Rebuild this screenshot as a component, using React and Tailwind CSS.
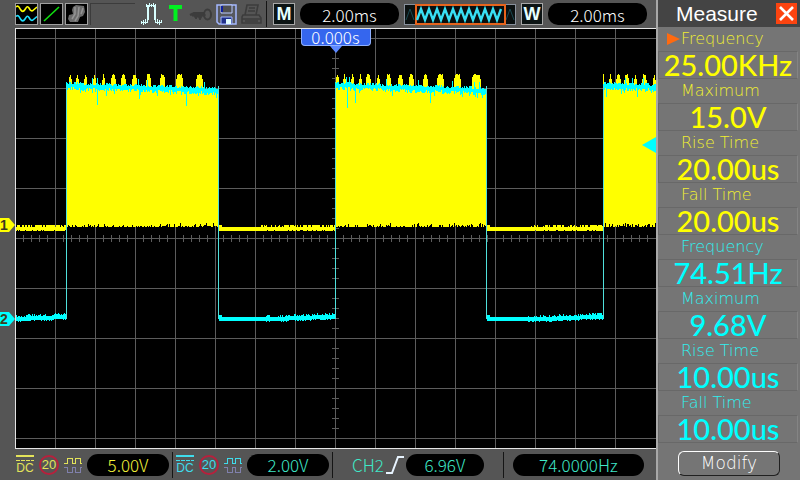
import { useState } from 'react';

const PLOT_W = 641;
const PLOT_H = 421;

const channels = [
  { id: 1, scale: '5.00V', zero: 197, text: 'text-[#f4f43a]', icon: 'text-[#e3e35a]', marker: 'text-[#ffff00]' },
  { id: 2, scale: '2.00V', zero: 291, text: 'text-[#3fe8c8]', icon: 'text-[#3fdcec]', marker: 'text-[#00ffff]' },
];

const measurements = [
  { ch: 1, name: 'Frequency', value: '25.00KHz' },
  { ch: 1, name: 'Maximum', value: '15.0V' },
  { ch: 1, name: 'Rise Time', value: '20.00us' },
  { ch: 1, name: 'Fall Time', value: '20.00us' },
  { ch: 2, name: 'Frequency', value: '74.51Hz' },
  { ch: 2, name: 'Maximum', value: '9.68V' },
  { ch: 2, name: 'Rise Time', value: '10.00us' },
  { ch: 2, name: 'Fall Time', value: '10.00us' },
];

// each burst: start / end column, overshoot peaks [x, half width] and downward glitches
const bursts = [
  {
    from: 51, to: 204,
    peaks: [[55, 1], [62, 1], [70, 1], [79, 1], [88, 1], [98, 2], [108, 2], [119, 2], [133, 2], [147, 2], [164, 3], [184, 3]],
    glitches: [[82, 20], [91, 11], [124, 13], [171, 18], [201, 9]],
  },
  {
    from: 320, to: 472,
    peaks: [[322, 1], [329, 1], [337, 1], [345, 1], [353, 2], [363, 1], [373, 2], [385, 2], [396, 2], [410, 2], [425, 3], [442, 3], [461, 4]],
    glitches: [[332, 24], [340, 18], [377, 10], [415, 16], [460, 8]],
  },
  {
    from: 588, to: 641,
    peaks: [[588, 0], [595, 1], [603, 2], [611, 2], [620, 1], [629, 2], [639, 1]],
    glitches: [[591, 13], [622, 12], [636, 7]],
  },
];

const lows = [[0, 51], [204, 320], [472, 588]];

// small repeatable noise source, keeps the trace still between renders
const makeNoise = (seed) => {
  let s = seed;
  return () => {
    s = (s * 1103515245 + 12345) % 2147483648;
    return s / 2147483648;
  };
};

const column = (x, top, bottom) => `M${x} ${top}h1V${bottom}h-1z`;

const buildTraces = () => {
  const rnd = makeNoise(77);
  let yellow = '';
  let cyan = '';

  bursts.forEach((b) => {
    for (let x = b.from; x < b.to; x++) {
      const t = (x - b.from) / 152;
      const top = 56 + Math.round(t * 5);
      const peak = b.peaks.find(([px, w]) => Math.abs(px - x) <= w);
      let yTop = top + 1;
      if (peak) {
        const off = Math.abs(peak[0] - x);
        const edge = off > 0 && off === peak[1];
        yTop = 46 + Math.floor(rnd() * 2) + (edge ? 3 + Math.floor(rnd() * 3) : 0);
      }
      yellow += column(x, yTop, 199 - Math.floor(rnd() * rnd() * 5));

      const glitch = b.glitches.find(([gx]) => gx === x);
      const cTop = top - (rnd() > 0.94 ? 7 : Math.floor(rnd() * 3));
      let cBottom = top + 3 + Math.floor(rnd() * 4);
      if (rnd() > 0.9) cBottom += 3;
      if (glitch) cBottom = top + glitch[1];
      cyan += column(x, cTop, cBottom);
    }
  });

  lows.forEach(([from, to]) => {
    for (let x = from; x < to; x++) {
      const settled = from === 0 ? 1 : (x - from) / (to - from);
      const noisy = settled > 0.35 ? 1 : 0;
      const start = from > 0 && x - from < 3 ? -2 : 0;
      const yUp = rnd() < 0.7 * settled ? 2 : rnd() > 0.8 ? 1 : 0;
      yellow += column(x, 199 - yUp * noisy + start, 203 - (rnd() > 0.8 ? 1 : 0) * noisy);
      const lift = from === 0 ? Math.round((x / to) * 2) : Math.max(0, Math.round((settled - 0.5) * 5));
      const cUp = noisy && rnd() > 0.5 ? 1 + Math.floor(rnd() * 2) : 0;
      cyan += column(x, 289 - lift - cUp + start, 293 - lift + (noisy && rnd() > 0.7 ? 1 : 0));
    }
  });

  return { yellow, cyan };
};

const traces = buildTraces();
const edges = [51, 203, 320, 471, 588];

function Grid() {
  const vertical = Array.from({ length: 15 }, (_, i) => 40 + i * 40);
  const horizontal = Array.from({ length: 9 }, (_, i) => 10 + i * 50);
  const ticksX = Array.from({ length: 79 }, (_, i) => 8 + i * 8);
  const ticksY = Array.from({ length: 41 }, (_, i) => 10 + i * 10);
  return (
    <g fill="#5c5c5c">
      {vertical.map(x => <rect key={x} x={x} y="0" width="1" height={PLOT_H} />)}
      {horizontal.map(y => <rect key={y} x="0" y={y} width={PLOT_W} height="1" />)}
      {ticksX.map(x => <rect key={x} x={x} y="207" width="1" height="7" />)}
      {ticksY.map(y => <rect key={y} x="317" y={y} width="7" height="1" />)}
    </g>
  );
}

function Plot() {
  return (
    <div className="relative min-w-0 flex-1 bg-black">
      <svg
        className="block h-full w-full"
        viewBox={`0 0 ${PLOT_W} ${PLOT_H}`}
        preserveAspectRatio="none"
        shapeRendering="crispEdges"
      >
        <Grid />
        <path d={traces.yellow} fill="#ffff00" />
        <path d={traces.cyan} fill="#00ffff" />
        {edges.map(x => <rect key={x} x={x} y="58" width="1" height="233" fill="#4fe0dc" />)}
        <path d="M0 0H641V1H1V420H641V421H0z" fill="#e4e4e4" />
        <path d="M627 117L641 109V125z" fill="#00ffff" shapeRendering="auto" />
      </svg>
      {/* trigger position flag */}
      <div className="absolute top-px left-1/2 flex -translate-x-1/2 flex-col items-center">
        <div className="w-[70px] rounded-b border border-t-0 border-[#8fb0ff] bg-[#3566ee] text-center font-['Noto_Sans_CJK_SC',sans-serif] text-[17px] leading-4 font-light text-white">
          0.000s
        </div>
        <svg width="12" height="7" viewBox="0 0 12 7">
          <path d="M0 0H12L6 7z" fill="#5c88ff" />
        </svg>
      </div>
    </div>
  );
}

function ChannelMarkers() {
  return (
    <div className="relative w-[15px] shrink-0">
      {channels.map(c => (
        <div
          key={c.id}
          className={`absolute left-0 flex h-[14px] w-[15px] -translate-y-1/2 items-center ${c.marker}`}
          style={{ top: `${(c.zero / PLOT_H) * 100}%` }}
        >
          <svg className="absolute inset-0" width="15" height="14" viewBox="0 0 15 14">
            <path d="M0 0H9L15 7L9 14H0z" fill="currentColor" />
          </svg>
          <span className="relative font-['Liberation_Sans',sans-serif] text-[14px] leading-none font-bold text-[#3c3c20]">{c.id}</span>
        </div>
      ))}
    </div>
  );
}

function Readout({ className, children }) {
  return (
    <div className={`flex h-[22px] items-center justify-center bg-black font-['Noto_Sans_CJK_SC',sans-serif] text-[17px] leading-none font-light ${className}`}>
      {children}
    </div>
  );
}

function Letter({ children }) {
  return (
    <div className="flex h-[22px] w-[22px] shrink-0 items-center justify-center border border-[#a8a8a8] bg-[#0c1414] font-['Liberation_Sans',sans-serif] text-[18px] leading-none font-bold text-[#e6ffff]">
      {children}
    </div>
  );
}

function Divider() {
  return <div className="h-[26px] w-px shrink-0 bg-[#151515]" />;
}

function StatusIcons() {
  const box = 'h-[22px] w-[23px] border border-[#a0a0a0] bg-black';
  return (
    <>
      <div className="flex shrink-0 gap-0.5">
        <svg className={box} viewBox="0 0 21 20" fill="none" strokeWidth="1.6">
          <path d="M0 3C2 1 3 3 4.500 5.500S7.500 8 9 5.500S11.500 1.500 13 4S15.500 8 17.500 6L21 3" stroke="#ffff00" />
          <path d="M0 12.500C2 10.500 3 12.500 4.500 15S7.500 17.500 9 15S11.500 11 13 13.500S15.500 17.500 17.500 15.500L21 12.500" stroke="#20e0ff" />
        </svg>
        <svg className={box} viewBox="0 0 21 20">
          <path d="M3 17L18 3" stroke="#10e010" strokeWidth="1.6" />
        </svg>
        <svg className={box} viewBox="0 0 21 20">
          <path d="M7 3L10 1L18 2L19 8L17 12L14 13L12 18L4 18L2 15L3 11L7 10L6 6z" fill="#6c6c6c" />
          <path d="M9 3V10L6 15M13 3L12 12L9 17M17 4L15 10" stroke="#949494" strokeWidth="1.5" fill="none" />
        </svg>
        <div className="h-[22px] w-[45px] border-t border-l border-[#3c3c3c]" />
      </div>
      <div className="ml-[5px] flex shrink-0 items-center gap-1">
        <svg width="24" height="22" viewBox="0 0 24 22" fill="none" stroke="#d8ffff" shapeRendering="crispEdges">
          <path d="M1.500 21V18M3.500 22V17M5.500 21V16M7.500 19V3M8.500 17V2M6.500 4V1M9.500 4V0M11.500 4V1M13.500 4V0M15.500 4V1M14.500 2V17M15.500 3V19M17.500 21V16M19.500 22V17M21.500 20V17" />
          <path d="M2 19.500H8M15 19.500H21M7 2.500H16" />
        </svg>
        <svg width="16" height="22" viewBox="0 0 16 22">
          <path d="M1 2H14V6H9.500V18H5.500V6H1z" fill="#00f020" />
        </svg>
        <svg width="24" height="22" viewBox="0 0 24 22" fill="none" stroke="#3c3c3c">
          <path d="M2 12L6 10H17" strokeWidth="2" />
          <path d="M4 11H17V13H14L12 17L10 13L8 16L6 13H4z" fill="#3c3c3c" strokeWidth="1" />
          <ellipse cx="19.500" cy="11.500" rx="3.500" ry="5" strokeWidth="2" />
        </svg>
        <svg width="21" height="21" viewBox="0 0 21 21">
          <path d="M1 1H20V20H3L1 18z" fill="#56585f" stroke="#a4b8ff" strokeWidth="1.5" />
          <path d="M5 1H16V9H5z" fill="#505050" stroke="#b8c8ff" />
          <path d="M6 2V8" stroke="#1020a0" strokeWidth="2" />
          <path d="M5 13H16V20H5z" fill="#20308a" stroke="#a4b8ff" />
          <path d="M10 15H15V20H10z" fill="#e0fcff" />
        </svg>
        <svg width="21" height="22" viewBox="0 0 21 22" fill="none" stroke="#3c3c3c" strokeWidth="1.6">
          <path d="M4 12L6 2H17L15 12M8 5H14M7 8H14" />
          <path d="M2 12H18L20 15V20H1V14zM1 16H20M4 18H17" />
        </svg>
        <Divider />
      </div>
    </>
  );
}

function WindowPreview() {
  const zigzag = (from, to) => {
    let d = `M${from} 16`;
    for (let x = from + 4, up = true; x <= to; x += 4, up = !up) d += `L${x} ${up ? 5 : 16}`;
    return d;
  };
  return (
    <svg className="h-[21px] w-[112px] shrink-0" viewBox="0 0 112 21" fill="none">
      <rect x="0.500" y="0.500" width="111" height="20" fill="#0a1010" stroke="#88909c" />
      <path d={zigzag(2, 11)} stroke="#184850" />
      <path d={zigzag(102, 111)} stroke="#184850" />
      <rect x="12" y="1" width="89" height="19" stroke="#e8641c" strokeWidth="2" />
      <path d={zigzag(13, 100)} stroke="#38e0f4" strokeWidth="2.4" />
    </svg>
  );
}

function TopBar() {
  return (
    <header className="flex h-7 shrink-0 items-center pr-[9px] pl-[15px]">
      <StatusIcons />
      <div className="ml-1.5 flex min-w-0 flex-1 items-center gap-[5px]">
        <Letter>M</Letter>
        <Readout className="flex-1 rounded-[10px] text-white">2.00ms</Readout>
        <WindowPreview />
        <Letter>W</Letter>
        <Readout className="flex-1 rounded-[10px] text-white">2.00ms</Readout>
      </div>
    </header>
  );
}

function ChannelStatus({ channel }) {
  return (
    <div className={`flex shrink-0 items-center gap-[5px] ${channel.icon}`}>
      <div className="flex w-[18px] flex-col items-center">
        <svg width="18" height="7" viewBox="0 0 18 7" stroke="currentColor" shapeRendering="crispEdges">
          <path d="M0 1H18" strokeWidth="2" />
          <path d="M0 5.500H18" strokeDasharray="4 1" />
        </svg>
        <span className="font-['Liberation_Sans',sans-serif] text-[12px] leading-3">DC</span>
      </div>
      <span className="flex h-5 w-5 items-center justify-center rounded-full border-2 border-[#b8203c] font-['Liberation_Sans',sans-serif] text-[13px] leading-none">
        20
      </span>
      <svg width="18" height="18" viewBox="0 0 18 18" fill="none" shapeRendering="crispEdges">
        <path d="M0 7.500H3.500V2.500H8.500V7.500H11.500V2.500H16.500V7.500H18" stroke="currentColor" />
        <path d="M0 11.500H3.500V16.500H8.500V11.500H11.500V16.500H16.500V11.500H18" stroke="#8080ac" />
      </svg>
      <Readout className={`w-[82px] rounded-full ${channel.text}`}>{channel.scale}</Readout>
    </div>
  );
}

function BottomBar() {
  return (
    <footer className="flex h-[31px] shrink-0 items-center gap-[3px] pl-4">
      {channels.map(c => (
        <div key={c.id} className="flex shrink-0 items-center gap-[3px]">
          <ChannelStatus channel={c} />
          <Divider />
        </div>
      ))}
      <div className="flex shrink-0 items-center gap-0.5 px-4 text-[#3fe8c8]">
        <span className="font-['Noto_Sans_CJK_SC',sans-serif] text-[17px] leading-none font-light">CH2</span>
        <svg width="18" height="20" viewBox="0 0 18 20" fill="none" stroke="#e8f4ff" strokeWidth="2">
          <path d="M0 18H6L12 2H18" />
        </svg>
        <Readout className="w-[78px] rounded-full">6.96V</Readout>
      </div>
      <Divider />
      <Readout className="mr-3 ml-1.5 flex-1 rounded-full text-[#3fe8c8]">74.0000Hz</Readout>
    </footer>
  );
}

function MeasurePanel({ onClose }) {
  const [selected, setSelected] = useState(0);
  return (
    <aside className="flex w-36 shrink-0 flex-col border-l-2 border-[#a8a8a8] bg-[#757575]">
      <div className="flex h-[27px] items-center justify-between bg-[#444444] pr-[3px] pl-[18px]">
        <h1 className="font-['Liberation_Sans',sans-serif] text-[21px] leading-none text-white">Measure</h1>
        <button
          type="button"
          aria-label="Close"
          onClick={onClose}
          className="flex h-[21px] w-[21px] items-center justify-center bg-[#fc4410]"
        >
          <svg width="15" height="15" viewBox="0 0 15 15" stroke="#ffffff" strokeWidth="2.6">
            <path d="M1 1L14 14M14 1L1 14" />
          </svg>
        </button>
      </div>
      <dl>
        {measurements.map((m, i) => (
          <div key={i} onClick={() => setSelected(i)}>
            <dt
              className={`flex h-6 items-center pl-[9px] font-['DejaVu_Sans',sans-serif] text-[16px] leading-none font-extralight ${m.ch === 1 ? 'text-[#f0f030]' : 'text-[#30f0f0]'}`}
            >
              <span className="w-[14px]">
                {selected === i && (
                  <svg width="13" height="12" viewBox="0 0 13 12">
                    <path d="M0 0L13 6L0 12z" fill="#ff6a10" />
                  </svg>
                )}
              </span>
              {m.name}
            </dt>
            <dd
              className={`mr-0.5 flex h-7 items-center justify-center border border-[#686868] border-r-[#848484] pb-0.5 font-['Lato',sans-serif] text-[29px] leading-none font-medium ${m.ch === 1 ? 'text-[#ffff00]' : 'text-[#00ffff]'}`}
            >
              {m.value}
            </dd>
          </div>
        ))}
      </dl>
      <button
        type="button"
        className="mx-5 mt-2 h-[25px] rounded-md border border-t-white border-r-[#202020] border-b-[#202020] border-l-white font-['DejaVu_Sans',sans-serif] text-[17px] leading-none font-extralight text-white"
      >
        Modify
      </button>
    </aside>
  );
}

export default function App() {
  const [showPanel, setShowPanel] = useState(true);

  return (
    <div className="flex h-screen overflow-hidden bg-[#555555]">
      <main className="flex min-w-0 flex-1 flex-col">
        <TopBar />
        <div className="flex min-h-0 flex-1">
          <ChannelMarkers />
          <Plot />
        </div>
        <BottomBar />
      </main>
      {showPanel && <MeasurePanel onClose={() => setShowPanel(false)} />}
    </div>
  );
}
